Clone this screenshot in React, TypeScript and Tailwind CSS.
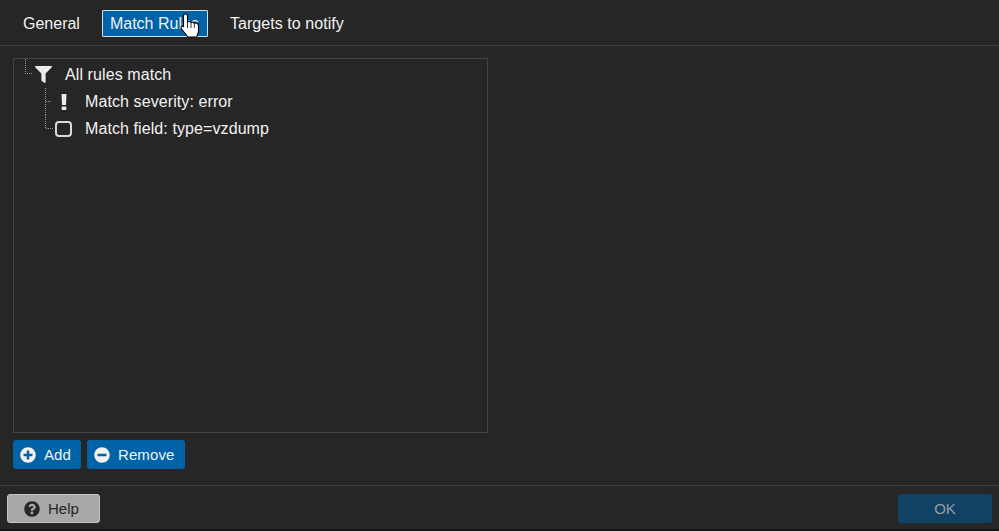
import React from "react";
import { FaFilter, FaPlusCircle, FaMinusCircle, FaQuestionCircle } from "react-icons/fa";

const font = "font-['Liberation_Sans',Arial,sans-serif]";

// dotted elbow connector from the tree: d is the path for the row
function Elbow({ d }: { d: string }) {
    return (
        <svg width="10" height="27" viewBox="0 0 10 27" className="shrink-0 overflow-visible">
            <path d={d} fill="none" stroke="#969696" strokeWidth="1" strokeDasharray="1 1" shapeRendering="crispEdges" />
        </svg>
    );
}

function TreeRow({ indent, elbow, icon, label }: { indent: string; elbow: string; icon: React.ReactNode; label: string }) {
    return (
        <div className="flex h-[27px] items-center">
            <div className={`${indent} shrink-0`} />
            <Elbow d={elbow} />
            <div className="flex w-[20px] shrink-0 items-center justify-center text-[#ececec]">{icon}</div>
            <span className="ml-[11px] text-[16px] tracking-[0.09px] text-[#f2f2f2]">{label}</span>
        </div>
    );
}

function BlueButton({ width, icon, label }: { width: string; icon: React.ReactNode; label: string }) {
    return (
        <button className={`${width} flex h-[29px] items-center rounded-[3px] bg-[#0063a8] pl-[7px] text-[15px] tracking-[0.1px] text-[#f2f2f2]`}>
            {icon}
            <span className="ml-[8px] pt-[1px]">{label}</span>
        </button>
    );
}

export default function App() {
    return (
        <div className={`relative flex h-[531px] w-[999px] flex-col overflow-hidden bg-[#262626] ${font}`}>
            {/* Tabs */}
            <div className="flex h-[46px] shrink-0 items-start border-b border-[#3f3f3f] pl-[15px] pt-[10px] text-[16px] text-[#f2f2f2]">
                <div className="flex h-[27px] items-center px-[8px]">General</div>
                <div className="ml-[14px] flex h-[27px] w-[106px] items-center rounded-[1px] border border-[#cfe3f2] bg-[#0063a8] pl-[7px]">Match Rules</div>
                <div className="ml-[14px] flex h-[27px] items-center px-[8px] tracking-[0.06px]">Targets to notify</div>
            </div>

            {/* Rule tree */}
            <div className="flex flex-1 flex-col pl-[13px] pt-[12px]">
                <div className="h-[375px] w-[475px] border border-[#444444] pt-[2px]">
                    <TreeRow indent="w-[10px]" elbow="M1.5 -2V12.5H9" icon={<FaFilter size={17} className="-translate-x-[1px]" />} label="All rules match" />
                    <TreeRow indent="w-[30px]" elbow="M1.5 0V27M1.5 13.5H7" icon={
                        <svg width="6" height="16" viewBox="0 0 6 16">
                            <path d="M0.5 0H5.5L5 11H1ZM0.7 12.4H5.3V16H0.7Z" fill="currentColor" />
                        </svg>
                    } label="Match severity: error" />
                    <TreeRow indent="w-[30px]" elbow="M1.5 0V13.5H9" icon={<div className="h-[16px] w-[17px] -translate-x-[1px] rounded-[4px] border-2 border-[#d9d9d9]" />} label="Match field: type=vzdump" />
                </div>
                <div className="mt-[7px] flex gap-[6px]">
                    <BlueButton width="w-[68px]" icon={<FaPlusCircle size={16} />} label="Add" />
                    <BlueButton width="w-[98px]" icon={<FaMinusCircle size={16} />} label="Remove" />
                </div>
            </div>

            {/* Footer */}
            <div className="flex h-[44px] shrink-0 items-start justify-between border-t border-[#3f3f3f] px-[7px] pt-[8px]">
                <button className="flex h-[29px] w-[93px] items-center rounded-[3px] border border-[#c4c4c4] bg-[#a8a8a8] pl-[16px] text-[15px] text-[#262626]">
                    <FaQuestionCircle size={16} />
                    <span className="ml-[8px] pt-[1px]">Help</span>
                </button>
                <button className="h-[29px] w-[94px] rounded-[3px] bg-[#114264] pt-[1px] text-[15px] text-[#939ea6]">OK</button>
            </div>
            <div className="h-[2px] shrink-0 bg-[#161616]" />

            {/* Mouse cursor over the active tab */}
            <svg width="21" height="25" viewBox="0 0 21 25" className="absolute left-[180px] top-[13px]">
                <path
                    d="M3.5 2.8C3.5 0.4 7.5 0.4 7.5 2.8V9.2C8.2 8.2 10.4 8.2 11 9.6C11.8 8.8 13.8 9 14.3 10.4C15.4 9.6 18.5 10 18.5 12.6V17.5C18.5 20 17.2 21.4 16.8 24H7.6C7 21.4 1 17 1 14.6C1 12.8 2.8 12.4 3.5 13.8Z"
                    fill="#ffffff"
                    stroke="#000000"
                    strokeWidth="1.1"
                    strokeLinejoin="round"
                />
                <path d="M7.5 9.2V15M11 9.6V15M14.3 10.4V15" stroke="#000000" strokeWidth="0.8" fill="none" />
            </svg>
        </div>
    );
}
